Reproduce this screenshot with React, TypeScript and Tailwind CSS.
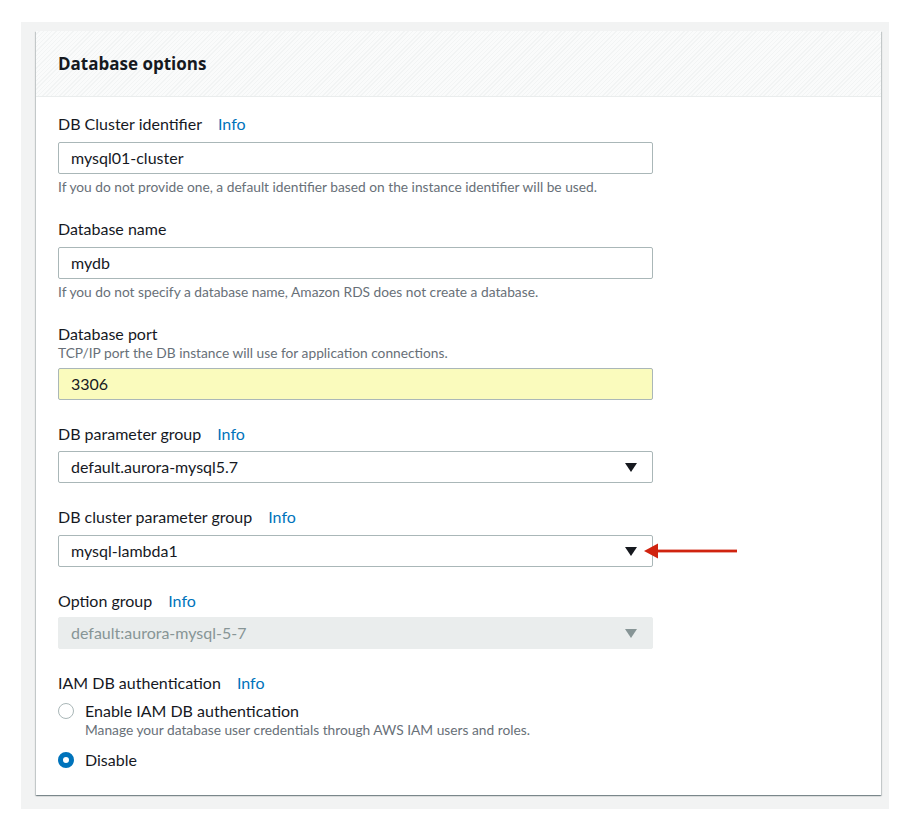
import React from "react";

const font = { fontFamily: '"Lato", "Open Sans", sans-serif' };

function Info() {
  return <span className="ml-[16px] text-[#0073bb]">Info</span>;
}

function Caret({ disabled }: { disabled?: boolean }) {
  return (
    <svg width="12" height="9" viewBox="0 0 12 9" className="shrink-0">
      <path d="M0 0 L12 0 L6 9 Z" fill={disabled ? "#879596" : "#16191f"} />
    </svg>
  );
}

function TextInput({ value, yellow }: { value: string; yellow?: boolean }) {
  return (
    <div
      className={`flex h-[32px] w-[595px] items-center rounded-[2px] border border-[#aab7b8] pl-[12px] text-[16px] text-[#16191f] ${
        yellow ? "bg-[#fafbbd]" : "bg-white"
      }`}
    >
      {value}
    </div>
  );
}

function Select({ value, disabled }: { value: string; disabled?: boolean }) {
  return (
    <div
      className={`flex h-[32px] w-[595px] items-center justify-between rounded-[2px] pl-[12px] pr-[15px] text-[16px] ${
        disabled
          ? "border border-[#eaeded] bg-[#eaeded] text-[#879596]"
          : "border border-[#aab7b8] bg-white text-[#16191f]"
      }`}
    >
      <span>{value}</span>
      <Caret disabled={disabled} />
    </div>
  );
}

function Label({ children }: { children: React.ReactNode }) {
  return <div className="h-[20px] text-[16px] leading-[20px] text-[#16191f]">{children}</div>;
}

function Hint({ children }: { children: React.ReactNode }) {
  return <div className="h-[18px] text-[13.75px] leading-[18px] text-[#687078]">{children}</div>;
}

export default function App() {
  return (
    <div className="min-h-[826px] bg-white pl-[21px] pt-[22px]" style={font}>
      <div className="w-[868px] bg-[#f2f3f3] pb-[14px] pl-[15px] pr-[8px] pt-[9px]">
        <div className="bg-white shadow-[0_1px_1px_0_rgba(0,28,36,0.3),1px_1px_1px_0_rgba(0,28,36,0.15),-1px_1px_1px_0_rgba(0,28,36,0.15)]">
          <div className="flex h-[66px] items-center border-b border-[#eaeded] bg-[#fafafa] bg-[repeating-linear-gradient(135deg,#fafbfb_0px,#fafbfb_2px,#f2f4f4_2px,#f2f4f4_3px)] pl-[22px]">
            <h2
              className="text-[17px] font-bold text-[#16191f]"
              style={{ fontFamily: '"Open Sans", "Lato", sans-serif' }}
            >
              Database options
            </h2>
          </div>
          <div className="flex flex-col pb-[25px] pl-[22px] pt-[17px]">
            <Label>
              DB Cluster identifier<Info />
            </Label>
            <div className="mt-[8px]">
              <TextInput value="mysql01-cluster" />
            </div>
            <div className="mt-[4px]">
              <Hint>If you do not provide one, a default identifier based on the instance identifier will be used.</Hint>
            </div>

            <div className="mt-[23px]">
              <Label>Database name</Label>
            </div>
            <div className="mt-[8px]">
              <TextInput value="mydb" />
            </div>
            <div className="mt-[4px]">
              <Hint>If you do not specify a database name, Amazon RDS does not create a database.</Hint>
            </div>

            <div className="mt-[23px]">
              <Label>Database port</Label>
            </div>
            <Hint>TCP/IP port the DB instance will use for application connections.</Hint>
            <div className="mt-[6px]">
              <TextInput value="3306" yellow />
            </div>

            <div className="mt-[24px]">
              <Label>
                DB parameter group<Info />
              </Label>
            </div>
            <div className="mt-[7px]">
              <Select value="default.aurora-mysql5.7" />
            </div>

            <div className="mt-[24px]">
              <Label>
                DB cluster parameter group<Info />
              </Label>
            </div>
            <div className="relative mt-[8px]">
              <Select value="mysql-lambda1" />
              <svg
                width="94"
                height="16"
                viewBox="0 0 94 16"
                className="absolute left-[586px] top-[8px]"
              >
                <path d="M0 8 L14 0.5 L14 15.5 Z" fill="#d0230f" />
                <rect x="12" y="6.6" width="81" height="2.8" fill="#d0230f" />
              </svg>
            </div>

            <div className="mt-[24px]">
              <Label>
                Option group<Info />
              </Label>
            </div>
            <div className="mt-[6px]">
              <Select value="default:aurora-mysql-5-7" disabled />
            </div>

            <div className="mt-[24px]">
              <Label>
                IAM DB authentication<Info />
              </Label>
            </div>
            <div className="mt-[8px] flex h-[20px] items-center">
              <span className="h-[16px] w-[16px] rounded-full border-[1.5px] border-[#aab7b8] bg-white" />
              <span className="ml-[11px] text-[16px] text-[#16191f]">Enable IAM DB authentication</span>
            </div>
            <div className="ml-[27px]">
              <Hint>Manage your database user credentials through AWS IAM users and roles.</Hint>
            </div>
            <div className="mt-[11px] flex h-[20px] items-center">
              <span className="h-[16px] w-[16px] rounded-full border-[5px] border-[#0073bb] bg-white" />
              <span className="ml-[11px] text-[16px] text-[#16191f]">Disable</span>
            </div>
          </div>
        </div>
      </div>
    </div>
  );
}
